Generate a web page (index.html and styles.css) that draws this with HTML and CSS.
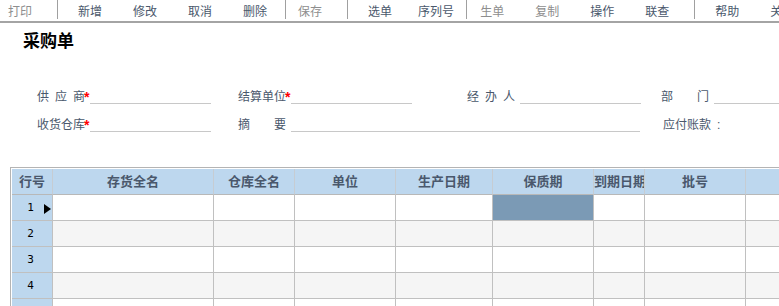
FILE: index.html
```html
<!DOCTYPE html>
<html lang="zh-CN">
<head>
  <meta charset="UTF-8">
  <title>采购单</title>
  <link rel="stylesheet" href="styles.css">
</head>
<body>

  <!-- 工具栏 -->
  <div class="toolbar">
    <span class="tool off">打印</span>
    <span class="sep"></span>
    <span class="tool">新增</span>
    <span class="tool">修改</span>
    <span class="tool">取消</span>
    <span class="tool">删除</span>
    <span class="sep sep-b"></span>
    <span class="tool off">保存</span>
    <span class="sep"></span>
    <span class="tool">选单</span>
    <span class="tool near">序列号</span>
    <span class="sep sep-c"></span>
    <span class="tool off">生单</span>
    <span class="tool off">复制</span>
    <span class="tool">操作</span>
    <span class="tool">联查</span>
    <span class="sep"></span>
    <span class="tool">帮助</span>
    <span class="tool">关闭</span>
  </div>

  <h2 class="title">采购单</h2>

  <!-- 单据头 -->
  <div class="form">
    <div class="field"><span class="label">供应商</span><span class="star">*</span><span class="line"></span></div>
    <div class="field"><span class="label">结算单位</span><span class="star">*</span><span class="line"></span></div>
    <div class="field"><span class="label">经办人</span><span class="line gap"></span></div>
    <div class="field"><span class="label">部门</span><span class="line gap"></span></div>
    <div class="field"><span class="label">收货仓库</span><span class="star">*</span><span class="line"></span></div>
    <div class="field wide"><span class="label">摘要</span><span class="line gap long"></span></div>
    <div class="field pay"><span class="label">应付账款</span><span class="colon">:</span></div>
  </div>

  <!-- 明细表格 -->
  <div class="grid">
    <div class="grid-row head">
      <div class="cell num">行号</div>
      <div class="cell">存货全名</div>
      <div class="cell">仓库全名</div>
      <div class="cell">单位</div>
      <div class="cell">生产日期</div>
      <div class="cell">保质期</div>
      <div class="cell">到期日期</div>
      <div class="cell">批号</div>
      <div class="cell"></div>
    </div>
    <div class="grid-row">
      <div class="cell num current">1</div>
      <div class="cell"></div><div class="cell"></div><div class="cell"></div><div class="cell"></div>
      <div class="cell selected"></div>
      <div class="cell"></div><div class="cell"></div><div class="cell"></div>
    </div>
    <div class="grid-row even">
      <div class="cell num">2</div>
      <div class="cell"></div><div class="cell"></div><div class="cell"></div><div class="cell"></div>
      <div class="cell"></div><div class="cell"></div><div class="cell"></div><div class="cell"></div>
    </div>
    <div class="grid-row">
      <div class="cell num">3</div>
      <div class="cell"></div><div class="cell"></div><div class="cell"></div><div class="cell"></div>
      <div class="cell"></div><div class="cell"></div><div class="cell"></div><div class="cell"></div>
    </div>
    <div class="grid-row even">
      <div class="cell num">4</div>
      <div class="cell"></div><div class="cell"></div><div class="cell"></div><div class="cell"></div>
      <div class="cell"></div><div class="cell"></div><div class="cell"></div><div class="cell"></div>
    </div>
    <div class="grid-row">
      <div class="cell num"></div>
      <div class="cell"></div><div class="cell"></div><div class="cell"></div><div class="cell"></div>
      <div class="cell"></div><div class="cell"></div><div class="cell"></div><div class="cell"></div>
    </div>
  </div>

</body>
</html>
```

FILE: styles.css
```css
html,
body {
  overflow: hidden;
}

body {
  margin: 0;
  font-family: "Liberation Sans", "Noto Sans CJK SC", sans-serif;
  font-size: 12px;
  color: #4a586c;
  background-color: #fff;
}

/* 工具栏 */
.toolbar {
  display: flex;
  align-items: flex-start;
  height: 21px;
  padding-left: 8px;
  border-bottom: 2px solid #a4a4a4;
  white-space: nowrap;
}

.tool {
  padding-top: 5px;
  line-height: 14px;
  color: #4a586c;
}

.tool.off {
  color: #8e8e8e;
}

.tool + .tool {
  margin-left: 31px;
}

.tool.near {
  margin-left: 26px;
}

.sep {
  flex: none;
  width: 1px;
  height: 19px;
  background-color: #a0a0a0;
  margin: 0 20px 0 25px;
}

.sep-b {
  margin: 0 12px 0 18px;
}

.sep-c {
  margin: 0 13px 0 12px;
}

/* 标题 */
.title {
  margin: 9px 0 0 23px;
  font-size: 17px;
  line-height: 20px;
  font-weight: bold;
  color: #000;
}

/* 单据头 */
.form {
  display: grid;
  grid-template-columns: 201px 229px 194px 200px;
  row-gap: 14px;
  margin-top: 38px;
  padding-left: 37px;
}

.field {
  display: flex;
  align-items: flex-start;
  height: 14px;
  line-height: 14px;
  white-space: nowrap;
}

.field.wide {
  grid-column: span 2;
}

.field.pay {
  margin-left: 2px;
}

.label {
  flex: none;
  width: 48px;
  text-align: justify;
  text-align-last: justify;
}

.star {
  flex: none;
  width: 5px;
  margin-left: -1px;
  padding-right: 1px;
  color: #ff0000;
  font-family: "Liberation Sans", sans-serif;
  font-size: 14px;
  font-weight: bold;
  line-height: 14px;
  overflow: visible;
}

.line {
  flex: none;
  width: 121px;
  height: 13px;
  border-bottom: 1px solid #c8c8c8;
}

.line.gap {
  margin-left: 5px;
}

.line.long {
  width: 349px;
}

.colon {
  margin-left: 6px;
}

/* 明细表格 */
.grid {
  width: 835px;
  margin: 35px 0 0 10px;
  padding: 1px;
  border: 1px solid #b4b4b4;
}

.grid-row {
  display: grid;
  grid-template-columns: 41px 161px 81px 101px 97px 101px 51px 101px 101px;
}

.cell {
  position: relative;
  box-sizing: border-box;
  height: 26px;
  line-height: 25px;
  border-right: 1px solid #c0c0c0;
  border-bottom: 1px solid #c0c0c0;
  overflow: hidden;
  white-space: nowrap;
  background-color: #fff;
}

.grid-row.even .cell {
  background-color: #f5f5f5;
}

.head .cell {
  background-color: #bdd7ee;
  text-align: center;
  font-size: 13px;
  font-weight: bold;
  color: #4a586c;
  border-right-color: #c6ccd2;
  border-bottom-color: #b8b8b8;
}

.grid-row .cell.num {
  background-color: #bdd7ee;
  text-align: center;
}

.grid-row:not(.head) .cell.num {
  font-family: "DejaVu Sans Mono", monospace;
  font-size: 11px;
  color: #000;
  padding-right: 3px;
}

.cell.current::after {
  content: "";
  position: absolute;
  left: 32px;
  top: 9px;
  border-left: 7px solid #000;
  border-top: 5px solid transparent;
  border-bottom: 5px solid transparent;
}

.cell.selected {
  background-color: #7b9ab5;
}
```
